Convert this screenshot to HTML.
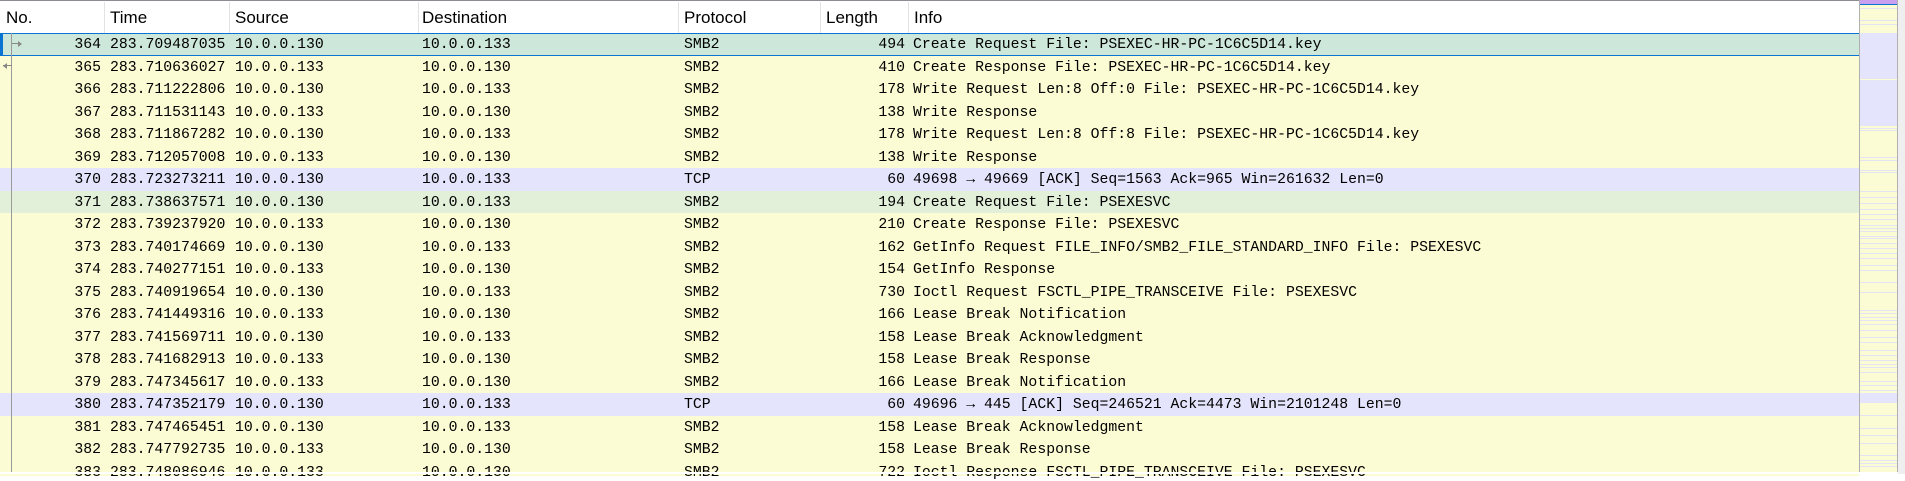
<!DOCTYPE html>
<html><head><meta charset="utf-8"><style>
body{margin:0;width:1905px;height:474px;overflow:hidden;background:#fff;position:relative;font-family:"Liberation Mono",monospace}
.hdr{position:absolute;left:0;top:0;width:1859px;height:32px;border-top:1px solid #8a8d92;border-bottom:1px solid #d6d6d6;background:#fff;font-family:"Liberation Sans",sans-serif;font-size:17px;color:#000}
.hdr span{position:absolute;top:7px}
.hdr i{position:absolute;top:1px;width:1px;height:31px;background:#e3e3e3}
.row{position:absolute;left:0;width:1859px;height:23px;font-size:14.8px;color:#000;background:#fcfcd4}
.row span{position:absolute;top:4px;white-space:pre}
.sel{background:#cde7da;border-top:1px solid #0a74d2;border-bottom:1px solid #0a74d2;box-sizing:border-box}
.sel span{top:3px}
.tcp{background:#e4e4fc}
.g{background:#e2f0d9}
.rel{position:absolute;left:11px;top:33px;width:1px;height:440px;background:#9a9a9a}
.sb{position:absolute;left:1859px;top:0;width:39px;height:472px;background:#fcfcd4;border-left:1px solid #b0b0b0;border-right:1px solid #b0b0b0;box-sizing:border-box}
.gr{position:absolute;left:1898px;top:0;width:7px;height:474px;background:#efefef}
</style></head><body>
<div class="hdr">
<span style="left:6px">No.</span><i style="left:104px"></i>
<span style="left:110px">Time</span><i style="left:229px"></i>
<span style="left:235px">Source</span><i style="left:418px"></i>
<span style="left:422px">Destination</span><i style="left:678px"></i>
<span style="left:684px">Protocol</span><i style="left:820px"></i>
<span style="left:826px">Length</span><i style="left:908px"></i>
<span style="left:914px">Info</span>
</div>
<div id="rows"></div>
<div class="sb" id="sb"></div>
<div class="gr"></div>
<script>
var d=[
[364,"283.709487035","10.0.0.130","10.0.0.133","SMB2",494,"Create Request File: PSEXEC-HR-PC-1C6C5D14.key","sel"],
[365,"283.710636027","10.0.0.133","10.0.0.130","SMB2",410,"Create Response File: PSEXEC-HR-PC-1C6C5D14.key",""],
[366,"283.711222806","10.0.0.130","10.0.0.133","SMB2",178,"Write Request Len:8 Off:0 File: PSEXEC-HR-PC-1C6C5D14.key",""],
[367,"283.711531143","10.0.0.133","10.0.0.130","SMB2",138,"Write Response",""],
[368,"283.711867282","10.0.0.130","10.0.0.133","SMB2",178,"Write Request Len:8 Off:8 File: PSEXEC-HR-PC-1C6C5D14.key",""],
[369,"283.712057008","10.0.0.133","10.0.0.130","SMB2",138,"Write Response",""],
[370,"283.723273211","10.0.0.130","10.0.0.133","TCP",60,"49698 \u2192 49669 [ACK] Seq=1563 Ack=965 Win=261632 Len=0","tcp"],
[371,"283.738637571","10.0.0.130","10.0.0.133","SMB2",194,"Create Request File: PSEXESVC","g"],
[372,"283.739237920","10.0.0.133","10.0.0.130","SMB2",210,"Create Response File: PSEXESVC",""],
[373,"283.740174669","10.0.0.130","10.0.0.133","SMB2",162,"GetInfo Request FILE_INFO/SMB2_FILE_STANDARD_INFO File: PSEXESVC",""],
[374,"283.740277151","10.0.0.133","10.0.0.130","SMB2",154,"GetInfo Response",""],
[375,"283.740919654","10.0.0.130","10.0.0.133","SMB2",730,"Ioctl Request FSCTL_PIPE_TRANSCEIVE File: PSEXESVC",""],
[376,"283.741449316","10.0.0.133","10.0.0.130","SMB2",166,"Lease Break Notification",""],
[377,"283.741569711","10.0.0.130","10.0.0.133","SMB2",158,"Lease Break Acknowledgment",""],
[378,"283.741682913","10.0.0.133","10.0.0.130","SMB2",158,"Lease Break Response",""],
[379,"283.747345617","10.0.0.133","10.0.0.130","SMB2",166,"Lease Break Notification",""],
[380,"283.747352179","10.0.0.130","10.0.0.133","TCP",60,"49696 \u2192 445 [ACK] Seq=246521 Ack=4473 Win=2101248 Len=0","tcp"],
[381,"283.747465451","10.0.0.130","10.0.0.133","SMB2",158,"Lease Break Acknowledgment",""],
[382,"283.747792735","10.0.0.133","10.0.0.130","SMB2",158,"Lease Break Response",""],
[383,"283.748086946","10.0.0.133","10.0.0.130","SMB2",722,"Ioctl Response FSCTL_PIPE_TRANSCEIVE File: PSEXESVC",""]];
var h="";
d.forEach(function(r,i){var t=33+i*22.5;
h+='<div class="row '+r[7]+'" style="top:'+t+'px;height:'+(i==19?15:22.5)+'px">'+
'<span style="right:'+(1859-101)+'px">'+r[0]+'</span>'+
'<span style="left:110px">'+r[1]+'</span>'+
'<span style="left:235px">'+r[2]+'</span>'+
'<span style="left:422px">'+r[3]+'</span>'+
'<span style="left:684px">'+r[4]+'</span>'+
'<span style="right:'+(1859-905)+'px">'+r[5]+'</span>'+
'<span style="left:913px">'+r[6]+'</span></div>';});
h+='<div class="rel"></div>';
h+='<div style="position:absolute;left:0;top:33px;width:3px;height:22px;background:#0a74d2"></div>';
h+='<div style="position:absolute;left:12px;top:43px;width:8px;height:1px;background:#888"></div><div style="position:absolute;left:18px;top:41px;width:0;height:0;border-left:4px solid #888;border-top:3px solid transparent;border-bottom:3px solid transparent"></div>';
h+='<div style="position:absolute;left:3px;top:65px;width:9px;height:1px;background:#888"></div><div style="position:absolute;left:3px;top:63px;width:0;height:0;border-right:4px solid #888;border-top:3px solid transparent;border-bottom:3px solid transparent"></div>';
h+='<div style="position:absolute;left:0;top:472px;width:1859px;height:2px;background:#fff"></div>';
document.getElementById("rows").innerHTML=h;
var s='<div style="position:absolute;left:0;top:0;width:37px;height:4px;background:#c9a0f0"></div><div style="position:absolute;left:0;top:4px;width:37px;height:1px;background:#0a74d2"></div><div style="position:absolute;left:0;top:33px;width:37px;height:45px;background:#e4e4fc"></div><div style="position:absolute;left:0;top:81px;width:37px;height:44px;background:#e4e4fc"></div>';
var ys=[8,20,24,78,80,125,128,130,157,160,170,172,191,197,203,209,214,219,225,228,231,236,238,243,248,253,258,265,270,282,292,310,313,317,320,324,330,337,342,350,355,360,364,367,372,381,385,390,400,415,428,435,443,455,460,463,466];
ys.forEach(function(y){s+='<div style="position:absolute;left:0;top:'+y+'px;width:37px;height:1px;background:#e4e4f4"></div>'});
s+='<div style="position:absolute;left:0;top:393px;width:37px;height:10px;background:#e4e4fc"></div>';
document.getElementById("sb").innerHTML=s;
</script>
</body></html>
